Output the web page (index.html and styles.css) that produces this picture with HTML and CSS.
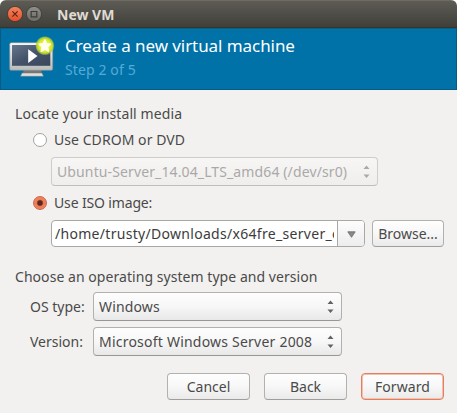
FILE: index.html
```html
<!DOCTYPE html>
<html lang="en">
<head>
<meta charset="utf-8">
<title>New VM</title>
<link rel="stylesheet" href="styles.css">
</head>
<body>
<div class="window">
  <header class="titlebar">
    <svg class="control" viewBox="0 0 16 16"><defs><linearGradient id="red" x2="0" y2="1"><stop stop-color="#f4845f"/><stop offset="1" stop-color="#e2502a"/></linearGradient></defs><circle cx="8" cy="8" r="7.6" fill="url(#red)" stroke="#35332e" stroke-width=".7"/><path d="M5.4 5.4l5.2 5.2M10.6 5.4l-5.2 5.2" stroke="#5b2414" stroke-width="1.2"/></svg>
    <svg class="control" viewBox="0 0 16 16"><defs><linearGradient id="gray" x2="0" y2="1"><stop stop-color="#91908a"/><stop offset="1" stop-color="#6c6a64"/></linearGradient></defs><circle cx="8" cy="8" r="7.6" fill="url(#gray)" stroke="#35332e" stroke-width=".7"/><path d="M5.2 5.5h5.6v5.4h-5.6z" fill="none" stroke="#3d3b36" stroke-width="1.2"/></svg>
    <span class="name">New VM</span>
  </header>
  <section class="banner">
    <svg class="monitor" viewBox="0 0 48 46">
      <defs>
        <linearGradient id="frame" x2="0" y2="1"><stop stop-color="#fafafa"/><stop offset="1" stop-color="#b9bbb9"/></linearGradient>
        <linearGradient id="screen" x2="1" y2="1"><stop stop-color="#65758b"/><stop offset=".5" stop-color="#45536a"/><stop offset="1" stop-color="#39465b"/></linearGradient>
        <radialGradient id="glow"><stop stop-color="#f6ff6c"/><stop offset=".65" stop-color="#d8ea2a"/><stop offset=".85" stop-color="#b4d235" stop-opacity=".85"/><stop offset="1" stop-color="#8cbc45" stop-opacity="0"/></radialGradient>
      </defs>
      <path d="M15 38h17l1 5H13z" fill="#777"/>
      <path d="M13 41h20l1.5 3.3h-23z" fill="#dedede" stroke="#777" stroke-width=".5"/>
      <rect x=".7" y="10.7" width="43" height="27.6" rx="1.5" fill="url(#frame)" stroke="#8b8f91" stroke-width=".6"/>
      <rect x="3" y="13" width="38.3" height="20.8" fill="url(#screen)"/>
      <path d="M19.2 17.2v13.8l9.3-6.9z" fill="#fff"/>
      <circle cx="35.9" cy="13.7" r="9.8" fill="url(#glow)"/>
      <path d="M35.9 7.5l1.9 4 4.2.6-3.1 3.1.8 4.5-3.8-2.1-3.9 2.1.8-4.5-3.1-3.1 4.3-.6z" fill="#fffff0" stroke="#fffff0"/>
    </svg>
    <div class="heading">
      <h1><span class="t-title">Create a new virtual machine</span></h1>
      <p><span class="t-step">Step 2 of 5</span></p>
    </div>
  </section>
  <main>
    <h2><span class="t-locate">Locate your install media</span></h2>
    <div class="choice cd"><i class="radio"></i><span class="t-cd">Use CDROM or DVD</span></div>
    <div class="combo drive"><span class="t-drive">Ubuntu-Server_14.04_LTS_amd64 (/dev/sr0)</span><svg class="arrows" viewBox="0 0 7 14"><path d="M.5 4L3.5 .5l3 3.5zM.5 9.5l3 3.5 3-3.5z"/></svg></div>
    <div class="choice iso"><i class="radio checked"></i><span class="t-iso">Use ISO image:</span></div>
    <div class="filerow">
      <div class="entry"><div class="path"><span class="t-path">/home/trusty/Downloads/x64fre_server_e</span></div><div class="drop"><svg viewBox="0 0 9 7"><path d="M.8.8h7.4L4.5 6.3z" fill="#8a8a88" stroke="#686866" stroke-width=".8"/></svg></div></div>
      <div class="button browse">Browse...</div>
    </div>
    <h2 class="os"><span class="t-os">Choose an operating system type and version</span></h2>
    <div class="field"><label>OS type:</label><div class="combo"><span class="t-win">Windows</span><svg class="arrows" viewBox="0 0 7 14"><path d="M.5 4L3.5 .5l3 3.5zM.5 9.5l3 3.5 3-3.5z"/></svg></div></div>
    <div class="field"><label>Version:</label><div class="combo"><span class="t-server">Microsoft Windows Server 2008</span><svg class="arrows" viewBox="0 0 7 14"><path d="M.5 4L3.5 .5l3 3.5zM.5 9.5l3 3.5 3-3.5z"/></svg></div></div>
    <div class="actions">
      <div class="button">Cancel</div>
      <div class="button">Back</div>
      <div class="button default"><span class="t-forward">Forward</span></div>
    </div>
  </main>
</div>
</body>
</html>
```
FILE: styles.css
```css
* { box-sizing: border-box; }
body { margin: 0; background: #fff; font: 14px/20px "Noto Sans", "Open Sans", sans-serif; color: #4a4a49; white-space: nowrap; }
.window { width: 457px; height: 413px; background: #f2f1f0; border-radius: 6px 6px 0 0; overflow: hidden; }
.titlebar { height: 28px; padding-left: 7px; display: flex; align-items: center; gap: 3px; background: linear-gradient(#5d5b54, #403f3a); border-top: 1px solid #6d6b64; border-bottom: 1px solid #33342f; }
.control { width: 16px; height: 16px; }
.name { margin: 2px 0 0 12px; font-weight: 700; color: #dfdbd2; }
.banner { height: 62px; padding: 0 9px; display: flex; gap: 8px; background: #0072a8; border: 1px solid #075b85; border-top-color: #105f83; color: #fff; }
.monitor { width: 48px; height: 46px; margin-top: 3px; margin-left: -1px; flex: none; }
.heading { padding-top: 5px; }
h1, h2, p { margin: 0; font-weight: 400; }
h1 { font-size: 17px; line-height: 24px; }
p { line-height: 24px; color: #55aad6; }
main { padding: 14px 13px 13px 15px; }
h2 { font-size: 14px; line-height: 20px; }
.choice { display: flex; align-items: center; gap: 7px; height: 20px; margin-left: 18px; }
.cd { margin-top: 6px; }
.radio { width: 14px; height: 14px; border: 1px solid #a4a39f; border-radius: 50%; background: #fff; }
.checked { border-color: #c8694d; background: radial-gradient(circle, #5b2a1b 0 2.2px, #f17c58 3.6px, #f0805c 6px); }
.combo { display: flex; justify-content: space-between; align-items: center; width: 249px; height: 29px; padding: 0 7px 0 5px; border: 1px solid #b3b1ae; border-bottom-color: #999794; border-radius: 4px; background: linear-gradient(#fdfdfd, #f7f7f7 50%, #e9e8e8); }
.arrows { width: 7px; height: 14px; fill: #626261; }
.drive { width: 327px; margin: 7px 0 0 36px; color: #aaa9a7; border-color: #cfcdca; border-bottom-color: #c0bebb; background: linear-gradient(#f7f6f5, #efeeed); }
.drive .arrows { fill: #aaa9a7; }
.iso { margin-top: 7px; }
.filerow { display: flex; gap: 7px; margin: 7px 0 0 36px; height: 27px; }
.entry { display: flex; width: 314px; border: 1px solid #aaa8a5; border-radius: 4px; background: #fff; overflow: hidden; }
.path { flex: 1; min-width: 0; overflow: hidden; margin: 0 3px; line-height: 25px; color: #3c3c3c; }
.drop { width: 27px; border-left: 1px solid #aaa8a5; background: linear-gradient(#fdfdfd, #eeeded); display: flex; align-items: center; justify-content: center; }
.drop svg { width: 9px; height: 7px; margin-top: 2px; }
.button { width: 83px; height: 27px; display: flex; align-items: center; justify-content: center; border: 1px solid #b3b1ae; border-bottom-color: #a09e9b; border-radius: 4px; background: linear-gradient(#fefefe, #f7f7f7 50%, #ebeaea); }
.browse { width: 72px; }
.os { margin: 20px 0 5px; }
.field { display: flex; align-items: center; height: 29px; margin-bottom: 6px; }
label { width: 63px; margin-left: 15px; }
.actions { display: flex; justify-content: flex-end; gap: 14px; margin-top: 17px; }
.default { border-color: #e27f60; box-shadow: inset 0 0 0 1px #f3c0ae; }

/* Tracking per label */
.t-title { letter-spacing: -.07px; }
.t-step { letter-spacing: .12px; }
.t-locate { letter-spacing: .11px; }
.t-cd { letter-spacing: .06px; }
.t-drive { letter-spacing: .12px; }
.t-iso { letter-spacing: -.15px; }
.t-path { letter-spacing: .3px; }
.t-os { letter-spacing: .05px; }
.t-win { letter-spacing: .15px; }
.t-server { letter-spacing: .22px; }
.t-forward { letter-spacing: .1px; }
```
